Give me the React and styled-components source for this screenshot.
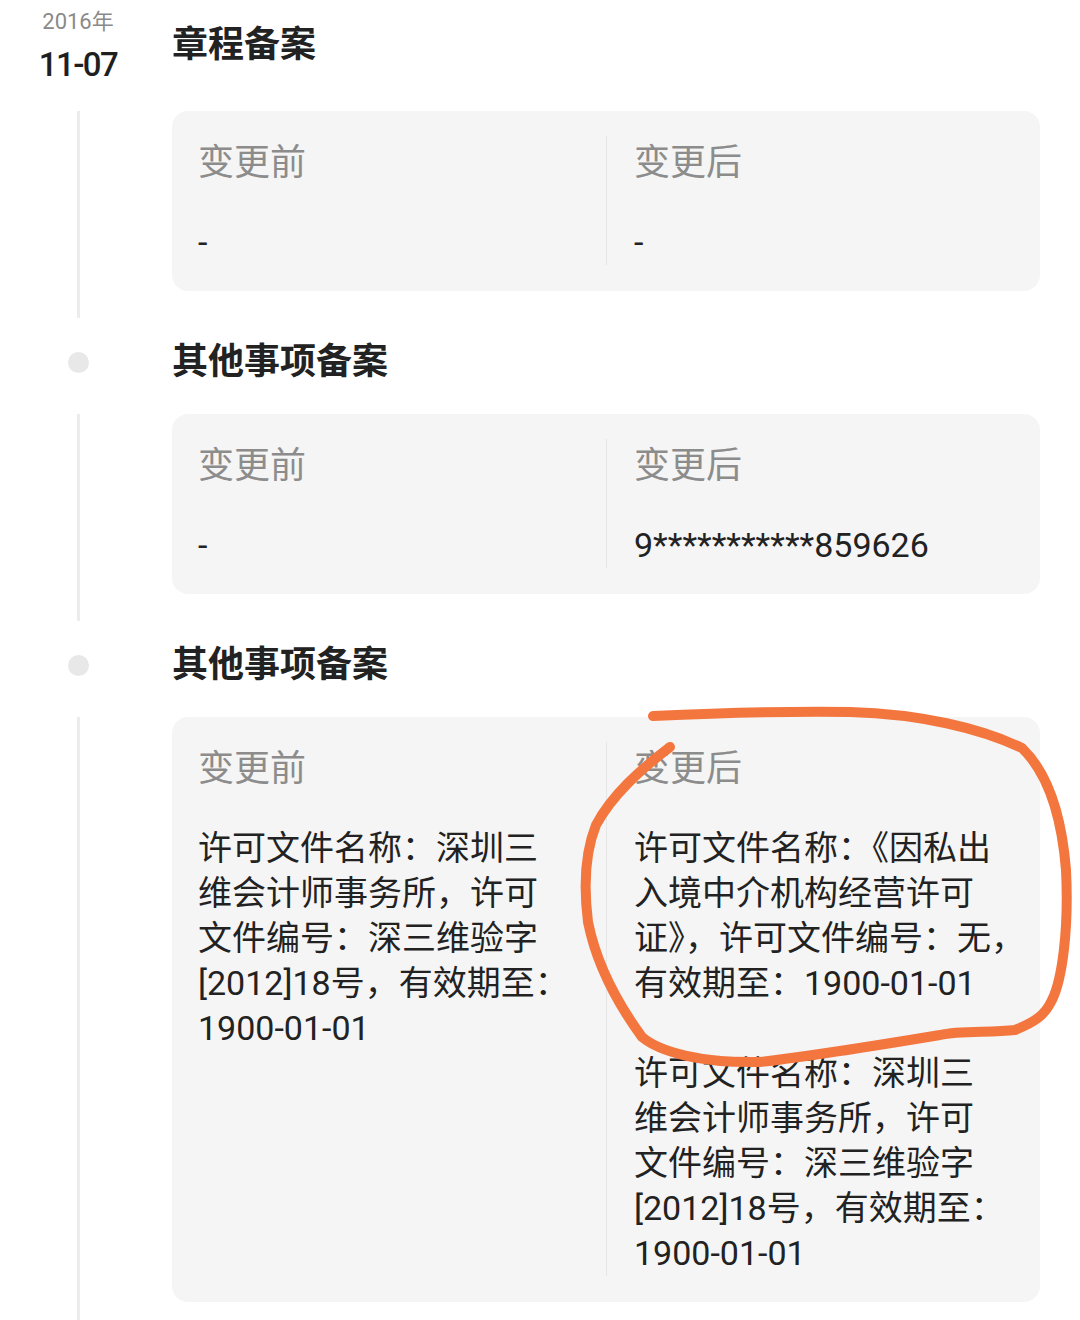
import React from "react";
import styled, { createGlobalStyle } from "styled-components";

const GlobalStyle = createGlobalStyle`
  html, body {
    margin: 0;
    padding: 0;
    background: #ffffff;
  }
  body {
    font-family: Roboto, "Noto Sans CJK SC", "Noto Sans", sans-serif;
    color: #222222;
  }
`;

const Page = styled.div`
  position: relative;
  width: 1080px;
  min-height: 1320px;
  overflow: hidden;
`;

const HeaderRow = styled.div`
  display: grid;
  grid-template-columns: 156px 16px 868px;
  align-items: ${({ first }) => (first ? "start" : "center")};
  padding: ${({ first }) => (first ? "0" : "19px 0 27px")};
  height: ${({ first }) => (first ? "111px" : "auto")};
  box-sizing: border-box;
`;

const DateBlock = styled.div`
  grid-column: 1;
  display: flex;
  flex-direction: column;
  align-items: center;
  padding-top: 8px;
`;

const Year = styled.div`
  font-size: 22px;
  line-height: 28px;
  color: #8a8a8a;
`;

const Day = styled.div`
  margin-top: 9px;
  font-size: 33px;
  line-height: 40px;
  font-weight: 500;
  letter-spacing: -1.5px;
  color: #1f1f1f;
`;

const Dot = styled.div`
  grid-column: 1;
  justify-self: center;
  width: 21px;
  height: 21px;
  border-radius: 50%;
  background: #e8e8e8;
`;

const Title = styled.h2`
  grid-column: 3;
  margin: 0;
  padding-top: ${({ first }) => (first ? "20px" : "0")};
  font-size: 36px;
  line-height: 50px;
  font-weight: 700;
  color: #222222;
`;

const BodyRow = styled.div`
  display: grid;
  grid-template-columns: 156px 16px 868px;
`;

const Rail = styled.div`
  grid-column: 1;
  justify-self: center;
  width: 3px;
  background: #ececec;
`;

const Card = styled.div`
  grid-column: 3;
  margin-bottom: 27px;
  display: grid;
  grid-template-columns: 1fr 1fr;
  align-items: stretch;
  padding: 25px 0 26px;
  background: #f5f5f5;
  border-radius: 16px;
`;

const Column = styled.div`
  min-width: 0;
  padding: 5px 20px 0 ${({ right }) => (right ? "27px" : "26px")};
  border-left: ${({ right }) => (right ? "1px solid #e6e6e6" : "none")};
`;

const Label = styled.div`
  font-size: 36px;
  line-height: 45px;
  color: #8c8c8c;
`;

const Values = styled.div`
  margin-top: 34px;
  display: flex;
  flex-direction: column;
  gap: 45px;
`;

const Value = styled.div`
  font-size: 34px;
  line-height: 45px;
  color: #222222;
  white-space: pre;
`;

const Annotation = styled.svg`
  position: absolute;
  left: 0;
  top: 0;
  pointer-events: none;
`;

const licenceOld =
  "许可文件名称：深圳三\n维会计师事务所，许可\n文件编号：深三维验字\n[2012]18号，有效期至：\n1900-01-01";
const licenceNew =
  "许可文件名称：《因私出\n入境中介机构经营许可\n证》，许可文件编号：无，\n有效期至：1900-01-01";

const records = [
  { title: "章程备案", before: ["-"], after: ["-"] },
  { title: "其他事项备案", before: ["-"], after: ["9***********859626"] },
  { title: "其他事项备案", before: [licenceOld], after: [licenceNew, licenceOld] },
];

function ChangeCard({ before, after }) {
  return (
    <Card>
      <Column>
        <Label>变更前</Label>
        <Values>
          {before.map((v, i) => (
            <Value key={i}>{v}</Value>
          ))}
        </Values>
      </Column>
      <Column right>
        <Label>变更后</Label>
        <Values>
          {after.map((v, i) => (
            <Value key={i}>{v}</Value>
          ))}
        </Values>
      </Column>
    </Card>
  );
}

export default function App() {
  return (
    <Page>
      <GlobalStyle />
      {records.map((rec, index) => (
        <React.Fragment key={index}>
          {index === 0 ? (
            <HeaderRow first>
              <DateBlock>
                <Year>2016年</Year>
                <Day>11-07</Day>
              </DateBlock>
              <Title first>{rec.title}</Title>
            </HeaderRow>
          ) : (
            <HeaderRow>
              <Dot />
              <Title>{rec.title}</Title>
            </HeaderRow>
          )}
          <BodyRow>
            <Rail />
            <ChangeCard before={rec.before} after={rec.after} />
          </BodyRow>
        </React.Fragment>
      ))}

      <Annotation width="1080" height="1320" viewBox="0 0 1080 1320">
        <path
          d="M653,716 C720,713 790,711 850,712 C920,714 980,728 1022,748 C1050,775 1062,820 1066,870 C1069,930 1062,980 1052,1000 C1045,1015 1035,1022 1015,1030 C990,1033 960,1030 940,1035 C880,1045 820,1055 760,1062 C700,1063 660,1052 642,1037 C615,1000 596,962 588,922 C583,882 586,850 596,825 C612,795 640,770 670,747"
          fill="none"
          stroke="#f4763f"
          strokeWidth="10"
          strokeLinecap="round"
          strokeLinejoin="round"
        />
      </Annotation>
    </Page>
  );
}
